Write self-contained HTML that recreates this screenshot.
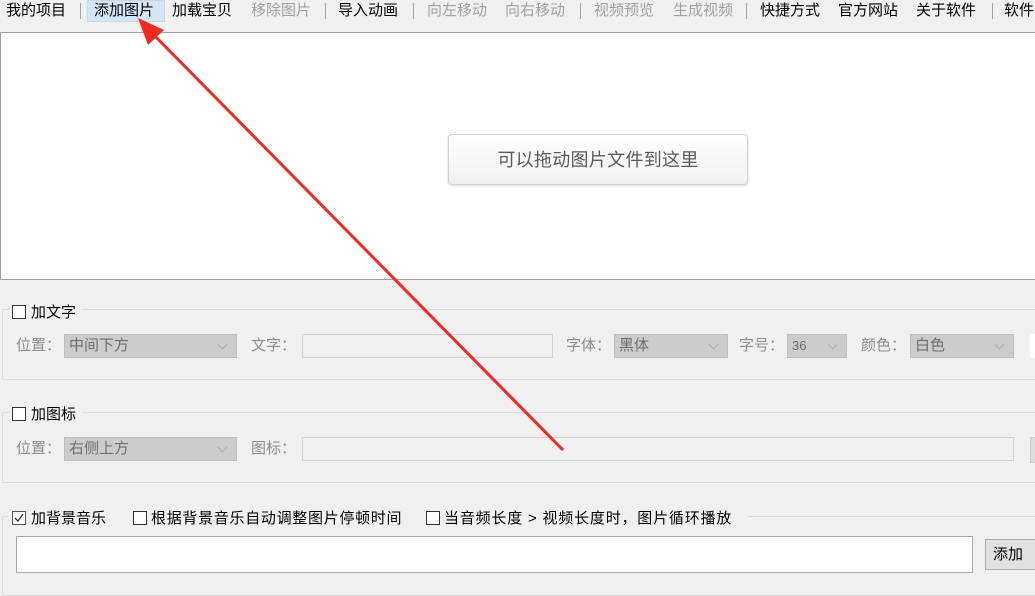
<!DOCTYPE html><html><head><meta charset="utf-8"><style>
*{margin:0;padding:0;box-sizing:border-box}
body{width:1035px;height:584px;background:#f0f0f0;position:relative;overflow:hidden;font-family:"Liberation Sans","Noto Sans CJK SC",sans-serif;font-size:15px;color:#000}
.a{position:absolute;white-space:nowrap}
.t{top:1px;line-height:20px}
.g{color:#a0a0a0}
.sep{position:absolute;top:3px;width:1px;height:16px;background:#a0a0a0}
.cb{position:absolute;width:14px;height:14px;border:1px solid #333;background:#fff}
.lbl{color:#8c8c8c;line-height:24px}
.combo{position:absolute;height:24px;background:#cccccc;border:1px solid #bdbdbd;color:#6d6d6d;line-height:22px;padding-left:4px}
.combo:after{content:"";position:absolute;right:10px;top:6px;width:6px;height:6px;border-right:1px solid #aaa;border-bottom:1px solid #aaa;transform:rotate(45deg)}
.inp{position:absolute;height:24px;border:1px solid #d2d2d2;background:#f0f0f0}
.grp{position:absolute;border:1px solid #dcdcdc;border-radius:2px}
</style></head><body>
<div class="a" style="left:87px;top:0;width:78px;height:22px;background:#d6e5f3;border:1px solid #c4d8ec"></div>
<div class="a t" style="left:6px">我的项目</div>
<div class="sep" style="left:80px"></div>
<div class="a t" style="left:94px">添加图片</div>
<div class="a t" style="left:172px">加载宝贝</div>
<div class="a t g" style="left:251px">移除图片</div>
<div class="sep" style="left:325px"></div>
<div class="a t" style="left:338px">导入动画</div>
<div class="sep" style="left:413px"></div>
<div class="a t g" style="left:427px">向左移动</div>
<div class="a t g" style="left:505px">向右移动</div>
<div class="sep" style="left:580px"></div>
<div class="a t g" style="left:594px">视频预览</div>
<div class="a t g" style="left:673px">生成视频</div>
<div class="sep" style="left:746px"></div>
<div class="a t" style="left:760px">快捷方式</div>
<div class="a t" style="left:838px">官方网站</div>
<div class="a t" style="left:916px">关于软件</div>
<div class="sep" style="left:992px"></div>
<div class="a t" style="left:1004px">软件</div>
<div class="a" style="left:0;top:32px;width:1040px;height:248px;background:#fff;border:1px solid #a0a0a0"></div>
<div class="a" style="left:448px;top:134px;width:300px;height:51px;border:1px solid #d2d2d2;border-radius:4px;background:linear-gradient(#fff,#f0f0f0);box-shadow:0 1px 2px rgba(0,0,0,.15);color:#5a5a5a;font-size:18px;text-align:center;line-height:51px;letter-spacing:0.3px">可以拖动图片文件到这里</div>

<div class="grp" style="left:2px;top:309px;width:1040px;height:71px"></div>
<div class="a" style="left:10px;top:300px;width:72px;height:22px;background:#f0f0f0"></div>
<div class="cb" style="left:12px;top:305px"></div>
<div class="a" style="left:31px;top:303px;line-height:20px">加文字</div>
<div class="a lbl" style="left:16px;top:334px">位置：</div>
<div class="combo" style="left:64px;top:334px;width:173px">中间下方</div>
<div class="a lbl" style="left:251px;top:334px">文字：</div>
<div class="inp" style="left:302px;top:334px;width:251px"></div>
<div class="a lbl" style="left:566px;top:334px">字体：</div>
<div class="combo" style="left:614px;top:334px;width:114px">黑体</div>
<div class="a lbl" style="left:739px;top:334px">字号：</div>
<div class="combo" style="left:787px;top:334px;width:60px;font-size:13px">36</div>
<div class="a lbl" style="left:861px;top:334px">颜色：</div>
<div class="combo" style="left:910px;top:334px;width:104px">白色</div>
<div class="a" style="left:1030px;top:334px;width:10px;height:24px;background:#fff"></div>

<div class="grp" style="left:2px;top:412px;width:1040px;height:71px"></div>
<div class="a" style="left:10px;top:403px;width:72px;height:22px;background:#f0f0f0"></div>
<div class="cb" style="left:12px;top:407px"></div>
<div class="a" style="left:31px;top:405px;line-height:20px">加图标</div>
<div class="a lbl" style="left:16px;top:437px">位置：</div>
<div class="combo" style="left:64px;top:437px;width:173px">右侧上方</div>
<div class="a lbl" style="left:251px;top:437px">图标：</div>
<div class="inp" style="left:302px;top:437px;width:712px"></div>
<div class="a" style="left:1030px;top:437px;width:10px;height:26px;background:#ddd;border:1px solid #ccc"></div>

<div class="grp" style="left:2px;top:516px;width:1040px;height:80px"></div>
<div class="a" style="left:8px;top:506px;width:740px;height:22px;background:#f0f0f0"></div>
<div class="cb" style="left:12px;top:511px;border-color:#555"><svg width="12" height="12" style="position:absolute;left:0;top:0"><path d="M2 6 L5 9 L10 2" stroke="#333" stroke-width="1.3" fill="none"/></svg></div>
<div class="a" style="left:31px;top:509px;line-height:20px">加背景音乐</div>
<div class="cb" style="left:133px;top:511px"></div>
<div class="a" style="left:151px;top:509px;line-height:20px;letter-spacing:0.7px">根据背景音乐自动调整图片停顿时间</div>
<div class="cb" style="left:426px;top:511px"></div>
<div class="a" style="left:444px;top:509px;line-height:20px;letter-spacing:0.8px">当音频长度 &gt; 视频长度时，图片循环播放</div>
<div class="a" style="left:16px;top:536px;width:957px;height:37px;background:#fff;border:1px solid #a8a8a8"></div>
<div class="a" style="left:985px;top:539px;width:55px;height:31px;background:#e1e1e1;border:1px solid #adadad;line-height:29px;padding-left:7px">添加</div>

<svg class="a" style="left:0;top:0" width="1035" height="584"><line x1="563" y1="450" x2="152" y2="33" stroke="#f02a1e" stroke-width="3"/><polygon points="138,18 164,30 148,45" fill="#f02a1e"/></svg>
</body></html>
